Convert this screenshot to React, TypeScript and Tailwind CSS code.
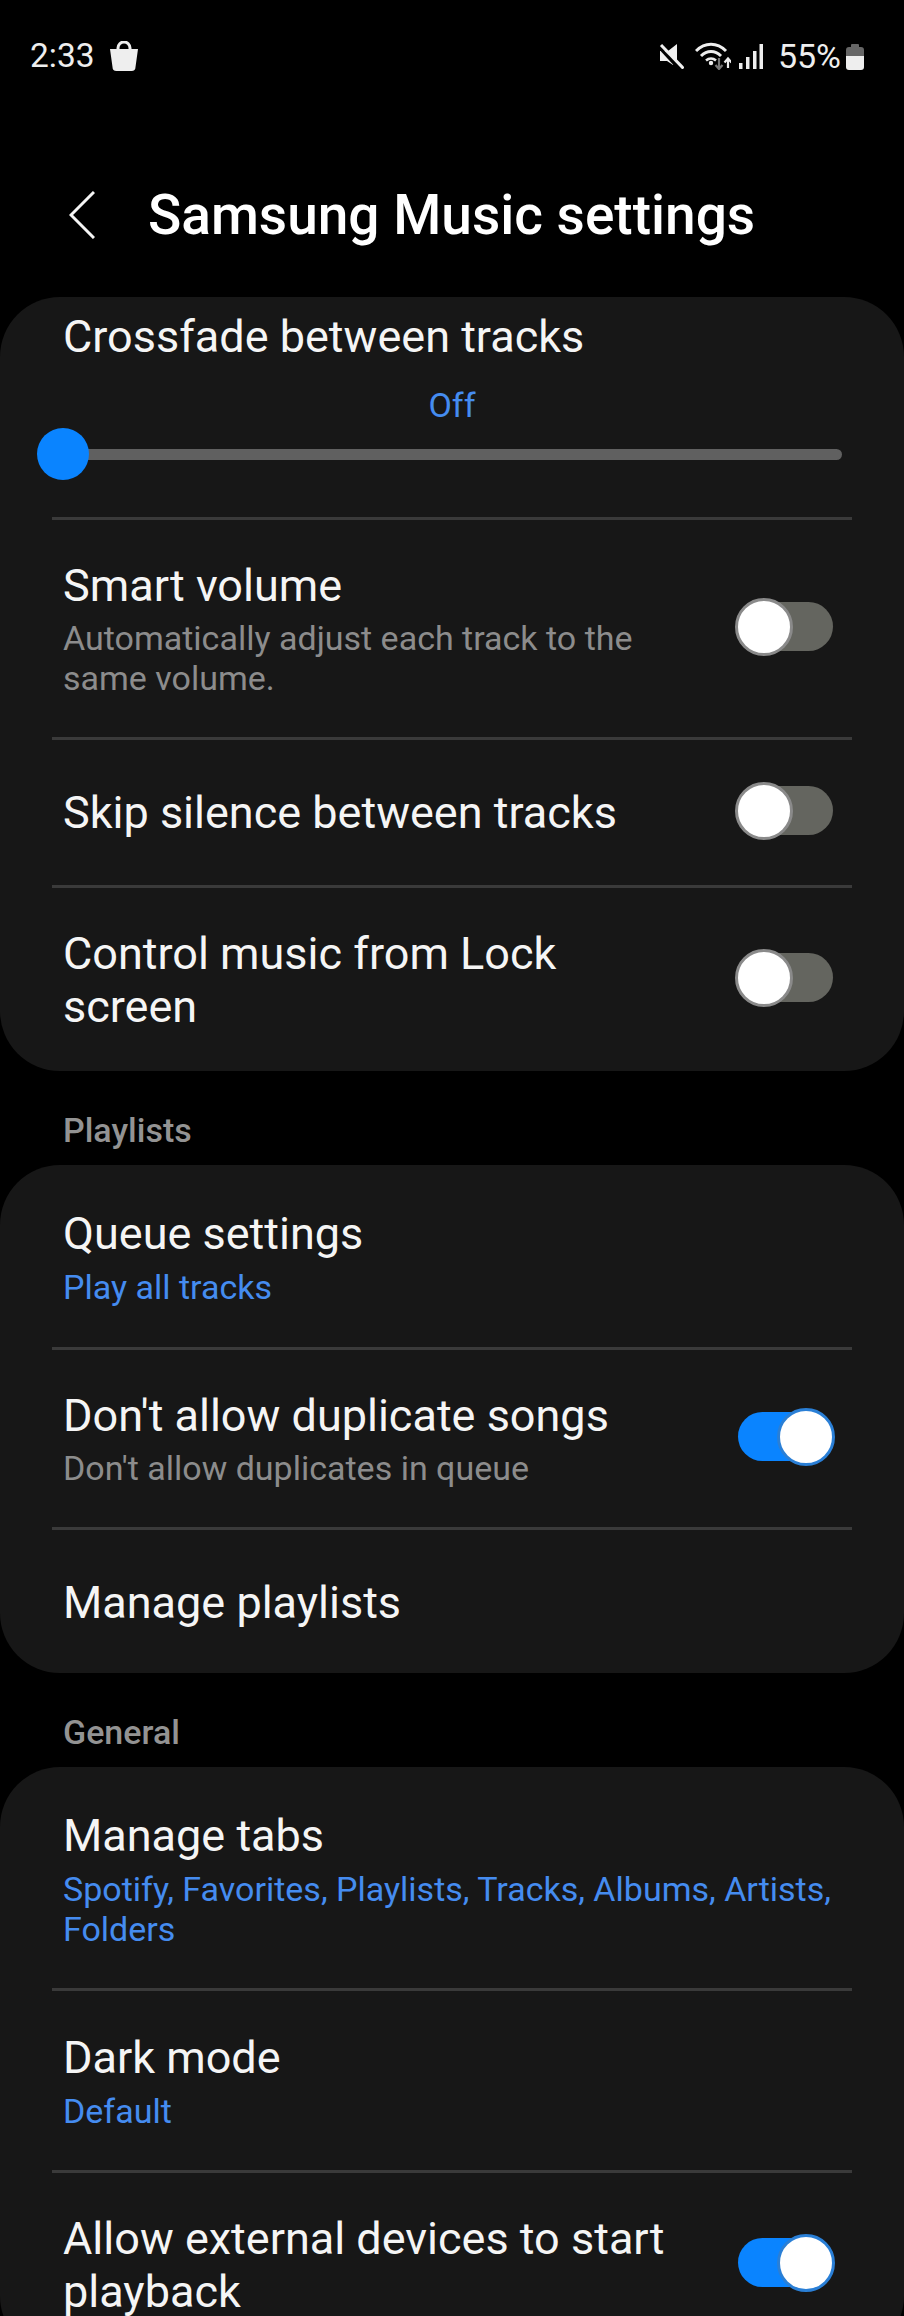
import type { ReactNode } from 'react';

function Toggle({ on }: { on?: boolean }) {
  return (
    <div className="relative -mt-[4px] w-[100px] h-[58px] shrink-0">
      <div
        className={`absolute left-[3px] right-[2px] top-[4px] h-[49px] rounded-full ${on ? 'bg-[#0a84ff]' : 'bg-[#64655f]'}`}
      />
      <div
        className={`absolute top-0 w-[58px] h-[58px] rounded-full bg-white border-[3px] ${on ? 'right-0 border-[#2a7fd6]' : 'left-0 border-[#8a8a8a]'}`}
      />
    </div>
  );
}

function Divider() {
  return <div className="mx-[52px] h-[3px] bg-[#3a3a3a]" />;
}

function Row({
  title,
  sub,
  link,
  on,
  hasToggle,
  className,
}: {
  title: ReactNode;
  sub?: string;
  link?: string;
  on?: boolean;
  hasToggle?: boolean;
  className: string;
}) {
  return (
    <div className={`flex items-center justify-between pl-[63px] pr-[69px] ${className}`}>
      <div className={hasToggle ? 'min-w-0 max-w-[610px]' : 'min-w-0'}>
        <div className="text-[45px] leading-[53px] text-[#f5f5f5]">{title}</div>
        {sub && <div className="mt-[6px] text-[34px] leading-[40px] text-[#8c8c8c]">{sub}</div>}
        {link && <div className="mt-[7px] text-[34px] leading-[40px] text-[#458cf0]">{link}</div>}
      </div>
      {hasToggle && <Toggle on={on} />}
    </div>
  );
}

function SectionLabel({ children }: { children: ReactNode }) {
  return (
    <div className="flex h-[94px] items-center pl-[63px] pt-[25px] text-[34px] font-medium text-[#939393]">
      {children}
    </div>
  );
}

function StatusIcons() {
  return (
    <div className="flex items-center">
      {/* mute */}
      <svg width="25" height="25" viewBox="0 0 25 25" className="mr-[11px]">
        <path d="M1 7h8l9-7v17L6 7v0zM1 7h5l9 13-1 1-6-4H1z" fill="#f0f0f0" />
        <path d="M0 3l22 24" stroke="#000" strokeWidth="3" />
        <path d="M2 1l22.500 23.500" stroke="#f0f0f0" strokeWidth="3" />
      </svg>
      {/* wifi */}
      <svg width="36" height="28" viewBox="0 0 36 28" className="mr-[8px]">
        <path d="M1 9C10 0 22 0 31 9" fill="none" stroke="#eee" strokeWidth="3" />
        <path d="M6 14C12 8 20 8 26 14" fill="none" stroke="#eee" strokeWidth="3" />
        <path d="M11 18.500C14 16 18 16 21 18.500" fill="none" stroke="#eee" strokeWidth="2.600" />
        <circle cx="16" cy="21" r="2.200" fill="#eee" />
        <path d="M24 16v10M20.500 23l3.500 4 3.500-4" fill="none" stroke="#777" strokeWidth="2.200" />
        <path d="M33 26V17M29.500 20.500l3.500-4 3.500 4" fill="none" stroke="#eee" strokeWidth="2.200" />
      </svg>
      {/* signal */}
      <svg width="24" height="25" viewBox="0 0 24 25" className="mr-[15px]" fill="#eee">
        <rect x="0" y="19" width="3.500" height="6" />
        <rect x="7" y="13" width="3.500" height="12" />
        <rect x="14" y="7" width="3.500" height="18" />
        <rect x="20.500" y="0" width="3.500" height="25" />
      </svg>
      <span className="text-[34px] leading-none text-[#eeeeee] mr-[5px]">55%</span>
      {/* battery */}
      <svg width="18" height="27" viewBox="0 0 18 27">
        <path d="M5 2a1 1 0 0 1 1-1h6a1 1 0 0 1 1 1v2h2a3 3 0 0 1 3 3v6H0V7a3 3 0 0 1 3-3h2z" fill="#666" />
        <path d="M0 13h18v11a3 3 0 0 1-3 3H3a3 3 0 0 1-3-3z" fill="#eee" />
      </svg>
    </div>
  );
}

export default function App() {
  return (
    <div className="h-[2316px] w-[904px] overflow-hidden bg-black font-['Roboto',sans-serif]">
      {/* status bar */}
      <div className="flex h-[112px] items-center justify-between pl-[30px] pr-[40px]">
        <div className="flex items-center gap-[15px]">
          <span className="text-[33.500px] leading-none text-[#eeeeee]">2:33</span>
          <svg width="28" height="30" viewBox="0 0 28 30">
            <path d="M8 9V7a6 6 0 0 1 12 0v2" fill="none" stroke="#eee" strokeWidth="3" />
            <path d="M0 8h28l-2.500 18a4 4 0 0 1-4 4h-15a4 4 0 0 1-4-4z" fill="#eee" />
          </svg>
        </div>
        <StatusIcons />
      </div>

      {/* title */}
      <div className="flex h-[185px] items-center pt-[21px]">
        <svg width="26" height="48" viewBox="0 0 26 48" className="ml-[69px]">
          <path d="M25 1L2 24l23 23" fill="none" stroke="#f5f5f5" strokeWidth="3" />
        </svg>
        <h1 className="ml-[53px] text-[55px] font-medium leading-none text-white">Samsung Music settings</h1>
      </div>

      {/* playback */}
      <div className="rounded-[60px] bg-[#171717]">
        <div className="h-[220px]">
          <div className="pl-[63px] pt-[14px] text-[45px] leading-[52px] text-[#f5f5f5]">Crossfade between tracks</div>
          <div className="mt-[22px] text-center text-[34px] leading-[40px] text-[#458cf0]">Off</div>
          <div className="relative mx-[37px] mt-[3px] h-[52px]">
            <div className="absolute left-[20px] right-[25px] top-[21px] h-[11px] rounded-full bg-[#606060]" />
            <div className="absolute left-0 top-0 h-[52px] w-[52px] rounded-full bg-[#0a84ff]" />
          </div>
        </div>
        <Divider />
        <Row
          className="h-[217px]"
          title="Smart volume"
          sub="Automatically adjust each track to the same volume."
          hasToggle
        />
        <Divider />
        <Row className="h-[145px]" title="Skip silence between tracks" hasToggle />
        <Divider />
        <Row className="h-[183px]" title="Control music from Lock screen" hasToggle />
      </div>

      <SectionLabel>Playlists</SectionLabel>

      <div className="rounded-[60px] bg-[#171717]">
        <Row className="h-[182px] pt-[2px]" title="Queue settings" link="Play all tracks" />
        <Divider />
        <Row
          className="h-[177px]"
          title="Don't allow duplicate songs"
          sub="Don't allow duplicates in queue"
          hasToggle
          on
        />
        <Divider />
        <Row className="h-[143px] pt-[2px]" title="Manage playlists" />
      </div>

      <SectionLabel>General</SectionLabel>

      <div className="rounded-[60px] bg-[#171717]">
        <Row
          className="h-[221px] pt-[2px]"
          title="Manage tabs"
          link="Spotify, Favorites, Playlists, Tracks, Albums, Artists, Folders"
        />
        <Divider />
        <Row className="h-[179px]" title="Dark mode" link="Default" />
        <Divider />
        <Row className="h-[183px]" title="Allow external devices to start playback" hasToggle on />
      </div>
    </div>
  );
}
